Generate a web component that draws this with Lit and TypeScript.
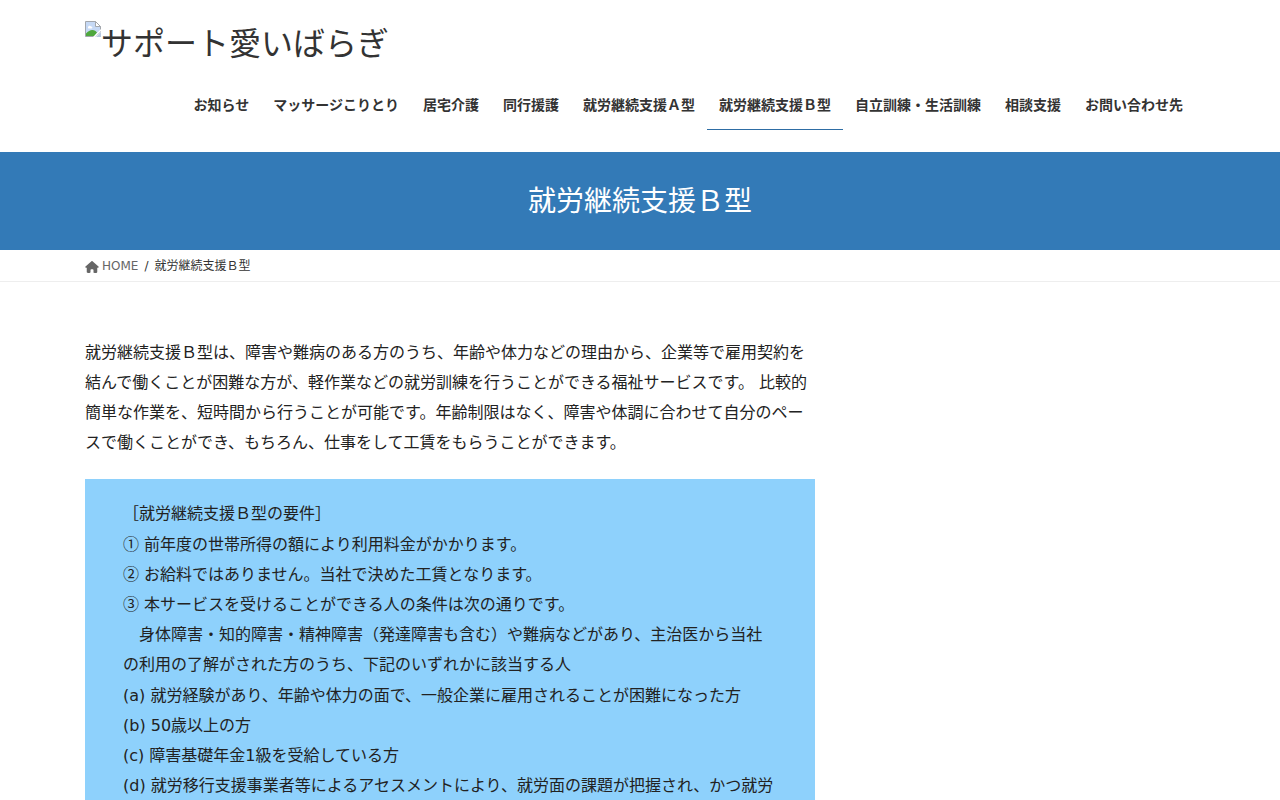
import { LitElement, html, css, svg } from "lit";
import { customElement } from "lit/decorators.js";

const NAV = [
  "お知らせ",
  "マッサージこりとり",
  "居宅介護",
  "同行援護",
  "就労継続支援Ａ型",
  "就労継続支援Ｂ型",
  "自立訓練・生活訓練",
  "相談支援",
  "お問い合わせ先",
];
const CURRENT = "就労継続支援Ｂ型";

const HOUSE = svg`<path d="M575.8 255.5c0 18-15 32.100-32 32.100h-32l.7 160.200c0 2.700-.2 5.400-.5 8.100V472c0 22.100-17.900 40-40 40h-16c-1.100 0-2.200 0-3.300-.1c-1.400.1-2.800.1-4.200.1H392c-22.100 0-40-17.900-40-40v-88c0-17.700-14.300-32-32-32h-64c-17.700 0-32 14.300-32 32v88c0 22.100-17.900 40-40 40h-55.900c-1.500 0-3-.1-4.500-.2c-1.200.1-2.400.2-3.600.2h-16c-22.100 0-40-17.900-40-40V360c0-.9 0-1.900.1-2.800v-69.600H32c-18 0-32-14-32-32.100c0-9 3-17 10-24L266.400 8c7-7 15-8 22-8s15 2 21 7l255.400 224.500c8 7 12 15 11 24z"/>`;

@customElement("app-root")
export class AppRoot extends LitElement {
  static styles = css`
    :host {
      display: block;
      color: #333;
      background: #fff;
      font-family: "DejaVu Sans", "Noto Sans CJK JP", sans-serif;
      font-size: 16px;
      line-height: 30px;
    }
    .container {
      box-sizing: border-box;
      max-width: 1140px;
      margin: 0 auto;
      padding: 0 15px;
    }
    .header {
      padding: 18px 0 22px;
    }
    .logo {
      display: flex;
      align-items: flex-start;
      width: fit-content;
      color: #333;
      font-family: "Noto Sans CJK JP", sans-serif;
      font-size: 32px;
      line-height: 46px;
      text-decoration: none;
    }
    .broken {
      flex: none;
      width: 16px;
      height: 16px;
      margin-top: 3px;
    }
    .menu {
      display: flex;
      justify-content: flex-end;
      margin: 16px 0 0;
      padding: 0;
      list-style: none;
    }
    .link {
      display: block;
      padding: 12px 12px;
      border-bottom: 1px solid transparent;
      color: #333;
      font-family: "Noto Sans CJK JP", sans-serif;
      font-size: 14px;
      font-weight: 700;
      line-height: 25px;
      text-decoration: none;
      white-space: nowrap;
    }
    .link.current {
      border-bottom-color: #2e6da4;
    }
    .banner {
      padding: 27px 0 31px;
      background: #337ab7;
      color: #fff;
      text-align: center;
    }
    .title {
      margin: 0;
      font-family: "Noto Sans CJK JP", sans-serif;
      font-size: 28px;
      font-weight: 400;
      line-height: 40px;
    }
    .crumbs {
      padding-top: 2px;
      border-bottom: 1px solid #eee;
      font-size: 12px;
      line-height: 29px;
    }
    .trail {
      display: flex;
      gap: 6px;
      margin: 0;
      padding: 0;
      list-style: none;
    }
    .home {
      display: flex;
      align-items: center;
      gap: 3px;
      color: #666;
      text-decoration: none;
    }
    .house {
      width: 14px;
      height: 12px;
      fill: #666;
    }
    .main {
      padding-top: 56px;
    }
    .column {
      max-width: 730px;
      color: #222;
    }
    .lead {
      margin: 0 0 21px;
    }
    .box {
      display: flex;
      flex-direction: column;
      gap: 1px;
      padding: 20px 38px;
      background: #8ed1fc;
    }
    .group {
      margin: 0;
      padding: 0;
      list-style: none;
    }
    .num {
      font-family: "Noto Sans CJK JP", sans-serif;
      line-height: 16px;
    }
  `;

  render() {
    return html`
      <header class="header">
        <div class="container">
          <a class="logo" href="#">
            <svg class="broken" viewBox="0 0 16 16" aria-hidden="true">
              <path d="M.5.5h10l5 5v5.500L10 15.500H.5z" fill="#c6d9f5" stroke="#a3a7ad" />
              <path d="M10.500.5v5h5z" fill="#fff" stroke="#a3a7ad" />
              <path d="M3 6.500c0-2 2.500-2.300 3-.9c1.600-.2 1.800 2 .3 2H4c-.8 0-1.200-.5-1-1.100z" fill="#fff" />
              <path d="M1 15v-2.500c3-3.500 6.500-4.500 9.500-2.500l1.500 1.500L9.500 15z" fill="#4fa83d" />
              <path d="M8 16l8-8v2l-6 6z" fill="#fff" />
              <path d="M11 16l5-5v5z" fill="#b9c9e0" />
            </svg>
            <span>サポート愛いばらぎ</span>
          </a>
          <nav>
            <ul class="menu">
              ${NAV.map(
                (name) => html`<li>
                  <a class="link ${name === CURRENT ? "current" : ""}" href="#">${name}</a>
                </li>`
              )}
            </ul>
          </nav>
        </div>
      </header>
      <div class="banner">
        <div class="container"><h1 class="title">就労継続支援Ｂ型</h1></div>
      </div>
      <nav class="crumbs">
        <div class="container">
          <ol class="trail">
            <li>
              <a class="home" href="#">
                <svg class="house" viewBox="0 0 576 512" aria-hidden="true">${HOUSE}</svg>
                <span>HOME</span>
              </a>
            </li>
            <li aria-hidden="true">/</li>
            <li>就労継続支援Ｂ型</li>
          </ol>
        </div>
      </nav>
      <main class="container main">
        <div class="column">
          <p class="lead">就労継続支援Ｂ型は、障害や難病のある方のうち、年齢や体力などの理由から、企業等で雇用契約を結んで働くことが困難な方が、軽作業などの就労訓練を行うことができる福祉サービスです。 比較的簡単な作業を、短時間から行うことが可能です。年齢制限はなく、障害や体調に合わせて自分のペースで働くことができ、もちろん、仕事をして工賃をもらうことができます。</p>
          <div class="box">
            <p class="group">［就労継続支援Ｂ型の要件］</p>
            <ol class="group">
              <li><span class="num">①</span> 前年度の世帯所得の額により利用料金がかかります。</li>
              <li><span class="num">②</span> お給料ではありません。当社で決めた工賃となります。</li>
              <li><span class="num">③</span> 本サービスを受けることができる人の条件は次の通りです。<br />　身体障害・知的障害・精神障害（発達障害も含む）や難病などがあり、主治医から当社の利用の了解がされた方のうち、下記のいずれかに該当する人</li>
            </ol>
            <ol class="group">
              <li>(a) 就労経験があり、年齢や体力の面で、一般企業に雇用されることが困難になった方</li>
              <li>(b) 50歳以上の方</li>
              <li>(c) 障害基礎年金1級を受給している方</li>
              <li>(d) 就労移行支援事業者等によるアセスメントにより、就労面の課題が把握され、かつ就労</li>
            </ol>
          </div>
        </div>
      </main>
    `;
  }
}
